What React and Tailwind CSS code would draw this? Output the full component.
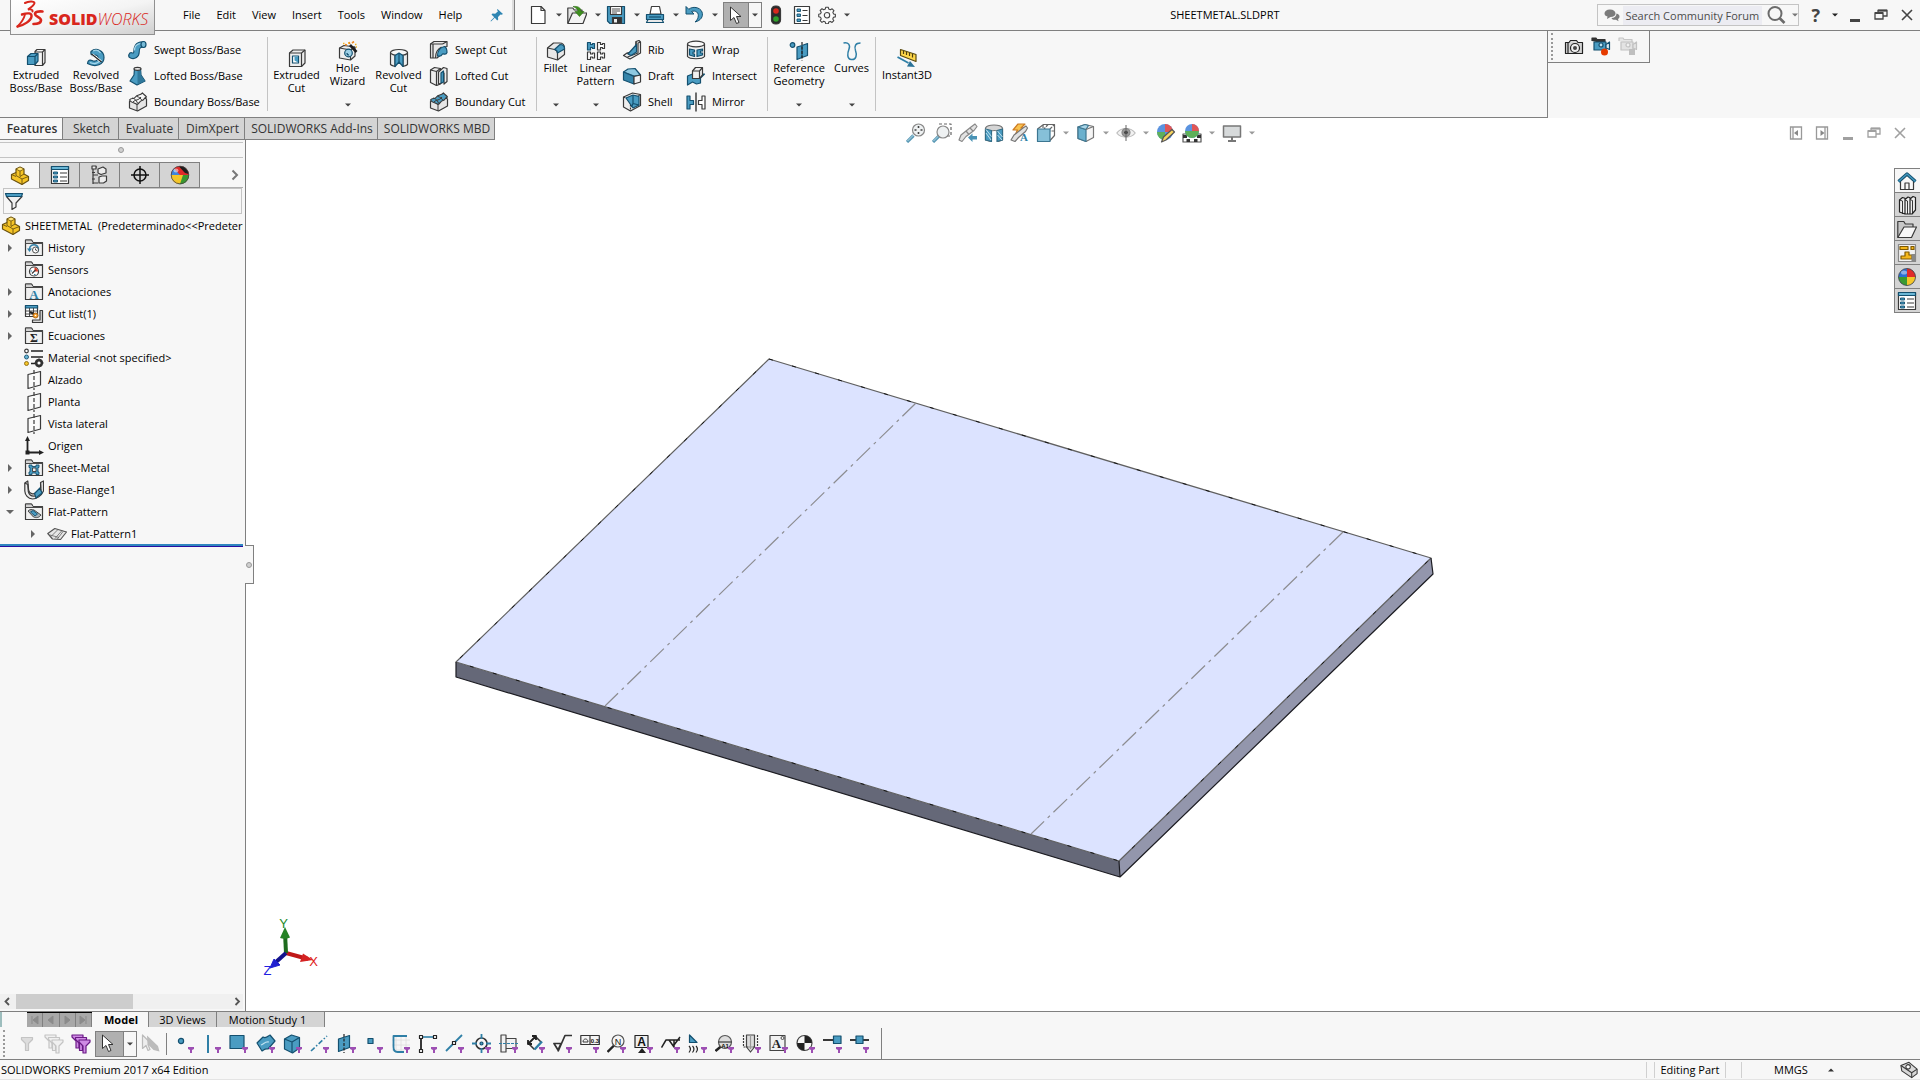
import React from "react";

const INK = "#3a3a3a";
const BLUE = "#4a9cc2";
const DEEP = "#14506f";

function Icon({ size = 20, children }) {
  return (
    <svg
      width={size}
      height={size}
      viewBox="0 0 20 20"
      fill="none"
      stroke={INK}
      strokeWidth="1.2"
      strokeLinejoin="round"
      className="shrink-0"
      aria-hidden="true"
    >
      {children}
    </svg>
  );
}

function Caret({ color = "#444", up = false }) {
  return (
    <svg width="6" height="4" viewBox="0 0 6 4" className="shrink-0" aria-hidden="true">
      <path d={up ? "M0 3.5h6L3 .5z" : "M0 .5h6L3 3.5z"} fill={color} />
    </svg>
  );
}

/* ---------- feature icons ---------- */
const ExtrudedBoss = () => (
  <Icon>
    <path d="M9 3.5l2-2h8v13l-2.5 3H9z" fill="#f4f4f4" />
    <path d="M16.5 4v13M9 4h7.5L19 1.5" />
    <path d="M1.500 8.500L5 5.500h7v7.500l-3 3.500H1.500z" fill={BLUE} stroke={DEEP} />
    <path d="M1.500 8.500H9v8M9 8.500l3-3" stroke={DEEP} />
  </Icon>
);
const RevolvedBoss = () => (
  <Icon>
    <path d="M5 3.500C10-1 18 2.500 18 9.500S10 20 1.500 15.500C2 12 4 11.500 6 12.500c3 1.500 6 0 6-3C12 7 9 6.500 7.500 8 5.500 8 4.500 6 5 3.500z" fill={BLUE} stroke={DEEP} />
    <path d="M7 3c3-1.500 6-.5 7.500 2M4 14.500c4 2 8 1 10-2" stroke="#a5d6ea" />
    <path d="M6 6.500l9 7" stroke="#fff" strokeWidth="2.6" />
    <path d="M5.500 6l10 8" stroke="#222" />
  </Icon>
);
const SweptBoss = () => (
  <Icon>
    <path d="M3.500 15.500C6 16.500 8.500 15 8.500 12c0-4 1-7.500 6-7.500" stroke={DEEP} strokeWidth="6.6" strokeLinecap="round" />
    <path d="M3.500 15.500C6 16.500 8.500 15 8.500 12c0-4 1-7.500 6-7.500" stroke={BLUE} strokeWidth="4.4" strokeLinecap="round" />
    <path d="M6.500 10.500c0-4 2-6.500 6-7" stroke="#a9d8ec" />
    <ellipse cx="15.5" cy="4.5" rx="2.5" ry="3" fill="#77bbd8" stroke={DEEP} />
  </Icon>
);
const LoftedBoss = () => (
  <Icon>
    <path d="M6.500 2.500L6 9l-4 6 7 4 8-4-4-6-.5-6.500z" fill={BLUE} stroke={DEEP} />
    <path d="M9.500 5v13.500L17 15l-4-6-.5-6z" fill="#2f789b" stroke="none" />
    <ellipse cx="9.5" cy="2.8" rx="3.5" ry="1.5" fill="#eee" />
  </Icon>
);
function Boundary({ top }) {
  return (
    <Icon>
      <path d="M1.500 9.500v6.500l8 3 9-5V7l-5-3z" fill="#e6e6e6" />
      <path d="M1.500 8c2-3 4 0 6-3s4-1 7-4c1 1.500 2.500 1.500 4 4-3 1-2 3-4.500 3.500S11 12 9 12.500c-2-2-5-1-7.500-4.500z" fill={top} />
      <path d="M5 10c3-3 5-1 8-5M9 12.500V19M4 6c3 .5 4 2 5.500 5M9 4.500c2 .5 4 2 5 4" strokeWidth="1" />
    </Icon>
  );
}
const ExtrudedCut = () => (
  <Icon>
    <path d="M2.500 5L6 2h12v13l-3.500 3.500h-12z" fill="#ededed" />
    <path d="M2.500 5h12v13.500M14.500 5L18 2" />
    <path d="M5.500 8h6v7h-6z" fill="#fff" stroke={DEEP} />
    <path d="M7.500 8.500h3.500v6l-3.500-2z" fill={BLUE} stroke="none" />
  </Icon>
);
const HoleWizard = () => (
  <Icon>
    <path d="M1.500 7L6 4.500l11 1.500v9l-4.500 4-11-2z" fill="#eee" />
    <path d="M1.500 7l11 2v10M12.500 9l4.500-3" />
    <circle cx="10.5" cy="12" r="3.8" fill="#9ed0e6" stroke={DEEP} />
    <path d="M9 12a2 2 0 002 2" stroke={DEEP} />
    <path d="M12 4l6.500 7" stroke="#1d1d1d" strokeWidth="2.6" />
    <path d="M11 1l.8 2M9 4l-2-.5M14 2l2-1.500" stroke="#f08a24" strokeWidth="1.6" />
    <path d="M10 2h1M17 3.500h1.500M5 2.500h1.500M18 6h1" stroke="#f4b21f" strokeWidth="1.6" />
  </Icon>
);
const RevolvedCut = () => (
  <Icon>
    <path d="M1.500 4.500v12c1 1 3 1.500 4.500 2V8l4 2 4-2v10.500c1.500-.5 3.500-1 4.500-2v-12z" fill="#ededed" />
    <ellipse cx="10" cy="4.5" rx="8.5" ry="3" fill="#f6f6f6" />
    <path d="M6 7.500L10 5l4 2.500v11L10 14l-4 4.500z" fill={BLUE} stroke={DEEP} />
    <path d="M10 5v9" stroke={DEEP} />
  </Icon>
);
const SweptCut = () => (
  <Icon>
    <path d="M1.500 4L5 1.500h13v5c-4 0-6 3-6 8l-4 3.500H1.500z" fill="#e9e9e9" />
    <path d="M1.500 4h12M13.500 4L18 1.500M4 4v14M6.500 18c0-6 2-9 6-11" />
    <path d="M8.500 16c0-5 2-8.500 7-9.500 2 1 2.500 3 2.500 6-1 3-3 1-4.500 1.500-1 2-3 2.500-5 2z" fill={BLUE} stroke={DEEP} />
  </Icon>
);
const LoftedCut = () => (
  <Icon>
    <path d="M1.500 4l4-2.500 6 1v15.500l-4 1.500-6-3z" fill="#ededed" />
    <path d="M1.500 4l6 1.500v14M7.500 5.500l4-3" />
    <path d="M9.500 6l5-4.500 3.500 1v13L15 18V7l-2 1v9l-3.500 1z" fill="#ededed" />
    <path d="M12 7l2.500-2v11L12 17z" fill={BLUE} stroke={DEEP} />
  </Icon>
);
const Fillet = () => (
  <Icon>
    <path d="M1.500 7l6-5h6c3 0 5 2 5 5v6.500l-7 5.500-10-3z" fill="#e8e8e8" />
    <path d="M1.500 7l7 1.500c2 .5 3 2 3 4v6.500" />
    <path d="M8.500 8.500l5.500-5c3 0 4.500 1.500 4.500 4.500l-7 4c0-2-1-3.200-3-3.500z" fill={BLUE} stroke={DEEP} />
  </Icon>
);
const PAT = "M0 0h3v2h2V1h2v5H5V5H3v2.5H0z";
const LinearPattern = () => (
  <Icon>
    <path d={PAT} transform="translate(1.5 1.5)" fill={BLUE} stroke={DEEP} />
    <path d={PAT} transform="translate(11.5 1.5)" fill="#fff" />
    <path d={PAT} transform="translate(1.5 11)" fill="#fff" />
    <path d={PAT} transform="translate(11.5 11)" fill="#fff" />
  </Icon>
);
const Rib = () => (
  <Icon>
    <path d="M14 1.500l3-1 1.500 1.500v11L8 19l-6.500-3.500L5 13l9-2z" fill="#eee" />
    <path d="M14 1.500V11L5 13.500M18.500 2l-2.500 1v10L5.500 17" />
    <path d="M6 14l8.500-9.500V12L9 15.500z" fill={BLUE} stroke={DEEP} />
  </Icon>
);
const Draft = () => (
  <Icon>
    <path d="M1.500 6L6 3l7-.5L18.500 9l-6.500 1z" fill="#8ec9e1" stroke={DEEP} />
    <path d="M1.500 6L12 10.500v7.500L1.500 14z" fill="#3585aa" stroke={DEEP} />
    <path d="M12 10.500l6.500-1.500v7l-6.500 2z" fill="#f4f4f4" />
  </Icon>
);
const Shell = () => (
  <Icon>
    <path d="M1.500 5l9-4 8 1.500v11L8.500 19l-7-4z" fill="#eee" />
    <path d="M1.500 5l7 3v11M8.500 8l10-5.500" strokeDasharray="2 1" />
    <path d="M4 6l7-3 6 1.500V13l-6 3z" fill={BLUE} stroke={DEEP} />
    <path d="M11 3v8.500l6 1.500M11 11.500L9.500 15" stroke={DEEP} />
  </Icon>
);
const Wrap = () => (
  <Icon>
    <path d="M1.500 4v12.500c2 3 15 3 17 0V4z" fill="#efefef" />
    <ellipse cx="10" cy="4" rx="8.5" ry="2.8" fill="#fafafa" />
    <path d="M3.500 9l5 1v2H7v2h1.500v2.500l-5-1.500zM16.500 9L11 10v6.500l5.500-1.500v-2h-2v-2h2z" fill={BLUE} stroke={DEEP} />
  </Icon>
);
const Intersect = () => (
  <Icon>
    <path d="M1.500 10l5-2h12l-4 4v5l-4 1-4-2-5 3z" fill={BLUE} stroke={DEEP} />
    <path d="M6.500 5l3-3.500h7V9l-3 3.500h-7z" fill="#f0f0f0" />
    <path d="M6.500 5h7v7.500M13.500 5l3-3.500" />
  </Icon>
);
const Mirror = () => (
  <Icon>
    <path d="M1 4h3v4.500h3.500v4H4V17H1z" fill={BLUE} stroke={DEEP} />
    <path d="M19 4h-3v4.500h-3.500v4H16V17h3z" fill="#fff" />
    <path d="M10 .5v19" stroke="#111" />
  </Icon>
);
const RefGeometry = () => (
  <Icon>
    <circle cx="3.5" cy="4" r="2.3" fill={BLUE} stroke={DEEP} />
    <path d="M8 6l5-1.500v12L8 18.500zM13 4.500l5.500-2v12l-5.500 2z" fill={BLUE} stroke={DEEP} />
    <path d="M13 1v18.500" stroke="#222" strokeDasharray="3 1.5" />
  </Icon>
);
const Curves = () => (
  <Icon>
    <path d="M1.500 2c5-1 7 2 5.500 6-1.500 4-2.500 10 2.500 10.500 5 .5 5.500-5 4-9C12 5 13.500 2 18.500 2" stroke="#2f7fa6" strokeWidth="1.5" />
  </Icon>
);
const Instant3D = () => (
  <Icon>
    <path d="M3.500 1.500l15.500 5v7l-15.500-6z" fill="#ffd84a" stroke="#5a4a10" />
    <path d="M6.500 3v3M9.500 4v3M12.500 5v3M15.500 6v3.500" stroke="#4d3f10" />
    <path d="M.5 9l11 6" stroke="#2f7fa6" strokeWidth="1.8" />
    <path d="M18 19l-8-.5 3-5.500z" fill="#2b7398" stroke="none" />
  </Icon>
);

/* ---------- title bar icons ---------- */
const NewDoc = () => (
  <Icon>
    <path d="M3.500 1.500h9.500l4 4v13h-13.500z" fill="#fff" />
    <path d="M13 1.500v4h4" />
  </Icon>
);
const OpenDoc = () => (
  <Icon>
    <path d="M.8 18V3h5l1.500 2H15v4" fill="#e4e4e4" />
    <path d="M.8 18.500L5.500 8H20l-4 10.500z" fill="#f3f3f3" />
    <path d="M6 1.500c5-.5 8 1 8 5h3L12.500 11.500 8 6.500h3C11 4 9 3 6 1.500z" fill="#3d8f1d" stroke="#2c6d12" strokeWidth=".6" />
  </Icon>
);
const SaveDoc = () => (
  <Icon>
    <path d="M1.500 1.500h17v17H4l-2.500-2.500z" fill={BLUE} stroke={DEEP} />
    <path d="M4.500 1.500h11v8h-11z" fill="#fff" />
    <path d="M6 4h8M6 6h8M6 8h5" strokeWidth=".9" />
    <path d="M6.500 12.500h9v6h-9z" fill="#333" />
    <path d="M8 14h3v3.500H8z" fill="#eee" stroke="none" />
  </Icon>
);
const PrintDoc = () => (
  <Icon>
    <path d="M5 9l1.500-7.500h8L16 9z" fill="#fff" />
    <path d="M1.500 9.500h17v5h-17z" fill={BLUE} stroke={DEEP} />
    <path d="M3 14.500h14l1.500 3h-17z" fill="#e9e9e9" stroke={DEEP} />
    <path d="M4 12h12" stroke={DEEP} />
  </Icon>
);
const Undo = () => (
  <Icon>
    <path d="M2 1.500v7.500h8L7.500 6.500c4-1.500 8 1 6.500 6-.5 2-1.500 3-3 4.500 6-1.500 8.500-5.500 7-10C16 2 8.500 1 4.800 4.300z" fill={BLUE} stroke={DEEP} strokeWidth="1" />
  </Icon>
);
const Pointer = () => (
  <svg width="14" height="19" viewBox="0 0 14 19" aria-hidden="true">
    <path d="M1.500 1v13.500l3.500-3 2.500 6 2.500-1-2.500-6H12z" fill="#fff" stroke="#333" />
  </svg>
);
const Traffic = () => (
  <Icon>
    <rect x="5.5" y="1" width="9" height="18" rx="4" fill="#2b2b2b" />
    <circle cx="10" cy="6" r="2.8" fill="#d8281c" stroke="none" />
    <circle cx="10" cy="14" r="2.8" fill="#2fa12b" stroke="none" />
  </Icon>
);
const ListIcon = () => (
  <Icon>
    <path d="M2.500 1.500h15v17h-15z" fill="#fff" />
    <path d="M5 4h3.500v2.500H5zM5 9h3.500v2.500H5zM5 14h3.500v2.500H5z" fill={BLUE} stroke={DEEP} strokeWidth=".9" />
    <path d="M10.500 5.500h5M10.500 10.500h5M10.500 15.500h5" />
  </Icon>
);
const Gear = () => (
  <svg width="18" height="18" viewBox="0 0 20 20" fill="none" stroke="#444" strokeWidth="1.200" strokeLinejoin="round" aria-hidden="true">
    <path d="M8.600 1.300h2.800l.5 2.100 1.900.8 1.900-1.100 2 2-1.200 1.900.8 1.800 2 .5v2.800l-2.100.5-.8 1.800 1.200 1.900-2 2-1.900-1.200-1.800.8-.5 2H8.600l-.5-2.100-1.800-.8-1.900 1.200-2-2 1.200-1.900-.8-1.800-2-.5V9.200l2-.5.8-1.800-1.200-1.900 2-2 1.900 1.200 1.800-.8z" fill="#fafafa" />
    <circle cx="10" cy="10.300" r="3" />
  </svg>
);
const Camera = () => (
  <Icon>
    <path d="M1.500 5.500H5l1.500-2h6L14 5.500h4.500v11h-17z" fill="#d5d5d5" stroke="#222" />
    <circle cx="11" cy="11" r="4.5" fill="#eee" stroke="#222" />
    <circle cx="11" cy="11" r="2" fill="#444" stroke="none" />
    <path d="M4 6v10" stroke="#222" />
  </Icon>
);
function Recorder({ off }) {
  const line = off ? "#c2c2c2" : DEEP;
  return (
    <Icon>
      <path d="M1 4V1h4l1 1.500h8V7" fill={off ? "#e6e6e6" : "#333"} stroke={off ? "#c6c6c6" : "#333"} />
      <path d="M3 5h12v8H3z" fill={off ? "#e3e3e3" : BLUE} stroke={line} />
      <path d="M15 7.500l3.500-2.500v7.500L15 11z" fill={off ? "#e3e3e3" : "#d8ecf4"} stroke={line} />
      <circle cx="10" cy="8" r="2" fill={off ? "#f1f1f1" : "#bfe2f0"} stroke={line} />
      {off ? <path d="M11 12h6v6h-6z" fill="#bfbfbf" stroke="none" /> : <circle cx="13.5" cy="15" r="3.5" fill="#e63b00" stroke="none" />}
    </Icon>
  );
}

/* ---------- feature tree icons ---------- */
const PartIcon = () => (
  <Icon>
    <path d="M1.500 8.500L6 6.500V3l4-2 4 2v5l4.500 2.500v4l-6.500 4-10.500-5.500z" fill="#f5c427" stroke="#6b5210" />
    <path d="M6 6.500v3L12 13v5.500M12 13l6.500-2.500M6 3l4 2v5.500L14 8M10 5l4-2M1.500 8.500L6 10.500" stroke="#6b5210" strokeWidth=".9" />
    <path d="M7 3l3-1.500L13 3l-3 1.500z" fill="#ffe680" stroke="none" />
  </Icon>
);
function FolderIcon({ children }) {
  return (
    <Icon>
      <path d="M1.500 17.500V2h6l1.500 2.500h9.500v13z" fill="#f0f0f0" />
      <path d="M1.500 5.500V2h6l1.500 2.500h9.500v1z" fill="#d2d2d2" strokeWidth=".9" />
      {children}
    </Icon>
  );
}
const HistoryIcon = () => (
  <FolderIcon>
    <path d="M5.500 11a4.500 4.500 0 118 3" stroke="#2f7fa6" strokeWidth="1.5" />
    <path d="M3 10.500h5l-2.500 3.500z" fill="#2f7fa6" stroke="none" />
    <circle cx="11.500" cy="12" r="3" fill="#fff" strokeWidth=".9" />
    <path d="M11.500 10.500V12l1.500.5" strokeWidth=".9" />
  </FolderIcon>
);
const SensorIcon = () => (
  <FolderIcon>
    <circle cx="10" cy="11.500" r="4.500" fill="#fff" />
    <path d="M10.500 7.500a4 4 0 013.500 4h-3.500z" fill="#e0402a" stroke="none" />
    <path d="M8 13.500l3.500-3.500" />
    <path d="M6.500 11h1.500M10 14.500h1.500" stroke="#2f7fa6" />
  </FolderIcon>
);
const AnnotIcon = () => (
  <FolderIcon>
    <text x="10" y="16.500" textAnchor="middle" fontSize="13" fontWeight="700" fontFamily="Liberation Serif, serif" fill="#2f7fa6" stroke="none">A</text>
  </FolderIcon>
);
const EquationIcon = () => (
  <FolderIcon>
    <text x="10" y="16" textAnchor="middle" fontSize="12" fontWeight="700" fontFamily="Liberation Serif, serif" fill="#222" stroke="none">Σ</text>
  </FolderIcon>
);
const CutListIcon = () => (
  <Icon>
    <path d="M1.500 1.500h12v11h-12z" fill="#fff" />
    <path d="M1.500 1.500h12V4h-12z" fill={BLUE} stroke={DEEP} />
    <path d="M1.500 7h12M1.500 10h12M5.500 4v8.500M9.500 4v8.500" strokeWidth=".9" />
    <path d="M18.500 6.500v12H8.500v-2.500H16V6.500z" fill="#d8d8d8" />
    <path d="M6 8l4 2" stroke="#222" strokeWidth="2" />
    <circle cx="11.500" cy="11.500" r="2.500" fill="#f6a12c" stroke="#a85d10" strokeWidth=".9" />
    <circle cx="11.500" cy="11.500" r=".8" fill="#fff" stroke="none" />
  </Icon>
);
const MaterialIcon = () => (
  <Icon>
    <circle cx="2.5" cy="3" r="1.8" fill="#fff" />
    <circle cx="2.5" cy="9" r="2" fill="#6bb7d6" stroke={DEEP} strokeWidth=".9" />
    <circle cx="2.5" cy="15.5" r="2" fill="#f5c427" stroke="#8a6a10" strokeWidth=".9" />
    <path d="M7 3h12M7 9h12M7 15.500h4" stroke="#222" strokeWidth="1.6" />
    <circle cx="15" cy="15" r="3" fill="#fff" stroke="#333" strokeWidth="2.4" />
    <path d="M15 10.500v9M10.500 15h9M12 12l6 6M18 12l-6 6" stroke="#333" strokeWidth="1.200" />
    <circle cx="15" cy="15" r="1.500" fill="#fff" stroke="none" />
  </Icon>
);
const PlaneIcon = () => (
  <Icon>
    <path d="M4 4.500l12.500-3v13.500l-12.500 3.500z" fill="#fafafa" />
    <path d="M10 0v20" strokeDasharray="4 2" />
  </Icon>
);
const OriginIcon = () => (
  <Icon>
    <path d="M3.500 3v13.500H17" stroke="#222" strokeWidth="1.8" />
    <path d="M1 5l2.500-5L6 5zM15 14l5 2.500-5 2.500zM1.500 14.500h4v4h-4z" fill="#222" stroke="none" />
  </Icon>
);
const SheetMetalIcon = () => (
  <FolderIcon>
    <path d="M5 7h3v1.500h4V7h3v2.500h-1V14h1v2.500h-3V15H8v1.500H5V14h1V9.500H5z" fill={BLUE} stroke={DEEP} strokeWidth=".9" />
    <rect x="8.5" y="10" width="3.5" height="3.5" fill="#eee" strokeWidth=".9" />
  </FolderIcon>
);
const BaseFlangeIcon = () => (
  <Icon>
    <path d="M.8 3l3-2 .8 9c.8 4 5 4.500 7 3l5-5V2.500L19.500 1v10c-2 5-7 8-11 8C4 18.500 1 15 .8 11z" fill="#eee" />
    <path d="M10.500 13.500L16 8l2 5-6 5z" fill={BLUE} stroke={DEEP} />
    <path d="M.8 3l3 1.500.5 7c1 4 4 5 7 4.500M16.500 2.500l.5 8" />
  </Icon>
);
const FlatFolderIcon = () => (
  <FolderIcon>
    <path d="M4 9c2-2 4-1.500 6-1l7 5c-2 3-5 3-7.500 2z" fill="#a9b3b8" strokeWidth=".9" />
    <path d="M6.500 10l2.500-1.500 4.500 3.500-2.500 2z" fill={BLUE} stroke={DEEP} strokeWidth=".9" />
  </FolderIcon>
);
const FlatPatternIcon = () => (
  <Icon>
    <path d="M.8 9.500l7-5L19.500 8l-6 7.500-8-.5z" fill="#e6e6e6" stroke="#555" />
    <path d="M4 12.500L11 5.500M8 14.500L15 6.500M3 11l9 2.500M10 15.500l6-8" strokeWidth=".8" stroke="#666" />
  </Icon>
);

const ConfigIcon = () => (
  <Icon>
    <path d="M3 1v18M3 2h4M3 10h5M3 18h5" />
    <path d="M2 1h4v3H2zM8 4l5-2 3 2v4l-5 1.500L8 8zM9 12l3-1h4.500v5l-3 2H9z" fill="#ececec" />
    <path d="M2 7.500h3M2 14h3" />
  </Icon>
);
const TargetIcon = () => (
  <Icon>
    <circle cx="10" cy="10" r="6" stroke="#111" strokeWidth="1.500" />
    <path d="M10 1v18M1 10h18" stroke="#111" strokeWidth="1.500" />
  </Icon>
);
const PropsIcon = () => (
  <Icon>
    <path d="M1.500 1.500h17v17h-17z" fill="#fff" />
    <path d="M1.500 1.500h17v3h-17z" fill="#6bb7d6" stroke={DEEP} />
    <path d="M3.500 7h4v2h-4zM3.500 11h4v2h-4zM3.500 15h4v2h-4z" fill={BLUE} stroke={DEEP} strokeWidth=".9" />
    <path d="M10 8h7M10 12h7M10 16h7" />
  </Icon>
);
const BallIcon = () => (
  <Icon>
    <circle cx="10" cy="10" r="8.5" fill="#2a6fd6" stroke="none" />
    <path d="M10 1.500a8.500 8.500 0 018.500 8.500H10z" fill="#e02a2a" stroke="none" />
    <path d="M18.500 10a8.500 8.500 0 01-8.500 8.500V10z" fill="#f4c62a" stroke="none" />
    <path d="M10 18.500A8.500 8.500 0 011.500 10H10z" fill="#3a9a32" stroke="none" />
    <circle cx="10" cy="10" r="8.5" stroke="#444" strokeWidth=".8" />
    <ellipse cx="7" cy="5.5" rx="3" ry="2" fill="#fff" opacity=".45" stroke="none" />
  </Icon>
);
const AppearanceTab = () => (
  <Icon>
    <circle cx="10" cy="10" r="9" fill="#e02a2a" stroke="none" />
    <path d="M1 10a9 9 0 013-6.500L10 10z" fill="#3f86df" stroke="none" />
    <path d="M1 10h9l-2 9a9 9 0 01-7-9z" fill="#f4c62a" stroke="none" />
    <path d="M10 10h9a9 9 0 01-11 9z" fill="#38982f" stroke="none" />
    <path d="M8 10h5l-3 9H8z" fill="#f4c62a" stroke="none" />
    <path d="M9 1.500C14 0 18 4 18.500 9L15 8z" fill="#1d1d1d" stroke="none" />
    <circle cx="10" cy="10" r="8.8" stroke="#444" strokeWidth=".8" />
    <ellipse cx="6" cy="5.5" rx="2.5" ry="2" fill="#fff" opacity=".5" stroke="none" />
  </Icon>
);

/* ---------- view toolbar icons ---------- */
function Lens({ children, x = 12.5, y = 7, r = 6 }) {
  return (
    <>
      <path d="M1 19l6.500-6.500" stroke="#5b9ab6" strokeWidth="3.2" />
      <path d="M1.500 18l6-6" stroke="#b5dae8" strokeWidth="1" />
      <circle cx={x} cy={y} r={r} fill="#eef1f2" stroke="#888" />
      {children}
    </>
  );
}
const ZoomFit = () => (
  <Icon>
    <Lens>
      <path d="M12.500 3v2M12.500 9v2M8.500 7h2M14.500 7h2" stroke="#444" strokeWidth="1.600" />
    </Lens>
  </Icon>
);
const ZoomArea = () => (
  <Icon>
    <path d="M7 1h12v12h-5" strokeDasharray="3 2" stroke="#666" />
    <Lens x={11} y={9} />
  </Icon>
);
const PrevView = () => (
  <Icon>
    <path d="M1 17l2-5 10-8 4-3 2 2.500-3 4-8 6-4 5z" fill="#e2e2e2" stroke="#888" />
    <path d="M12 5l3 3M8 8l3 3.500" stroke="#888" />
    <path d="M10 14.500l4.500-4v2.500H19v3.500h-4.500V19z" fill="#4a93b5" stroke="none" />
  </Icon>
);
const SectionView = () => (
  <Icon>
    <path d="M1.500 5c2-4 15-4 17 0v12l-4 1.500V9c-1-2-7-2-8 0v9.500l-5-1.500z" fill="#d5d5d5" stroke="#777" />
    <path d="M1.500 6l6 1.500V18.500l-6-1.500zM13 7.500l5.500-1.500v11l-5.500 1.500z" fill={BLUE} stroke="#336d87" />
    <path d="M2 10l5 7M2 6.500l5.500 7M13.500 12l4.500 5M13.500 8l5 6" stroke="#cfe8f2" strokeWidth=".9" />
  </Icon>
);
const AnnotView = () => (
  <Icon>
    <path d="M8 1h7l-4 4h3l-9 7 2.500-5H3z" fill="#f9c24e" stroke="#cc7a22" />
    <path d="M1 17l3-5 9-7 3-2 1.500 2-2 3.500-7 6-3.500 4z" fill="#e2e2e2" stroke="#777" />
    <text x="14" y="18" textAnchor="middle" fontSize="11" fontWeight="700" fontFamily="Liberation Serif, serif" fill="#2f7fa6" stroke="none">A</text>
  </Icon>
);
const Orientation = () => (
  <Icon>
    <path d="M1.500 6l6-4.500h11v11l-4.500 5" stroke="#666" />
    <path d="M14 6l4.500-4.500M7 2v4M12 1.500L8 6M18.500 8H14" stroke="#666" strokeDasharray="3 1" />
    <path d="M1.500 6H14v12.500H1.500z" fill="#86c0d8" stroke="#3c7691" />
  </Icon>
);
const DisplayStyle = () => (
  <Icon>
    <path d="M2 4l7-2.500 8.500 2v11l-7.500 4-8-3z" fill="#f5f5f5" stroke="#777" />
    <path d="M2 4l8 2.500v12l-8-3z" fill="#6ab0cd" stroke="#3c7691" />
    <path d="M2 4l7-2.500 3.500 1L10 6.500z" fill="#a9d5e7" stroke="#3c7691" />
    <path d="M10 6.500l7.500-3" stroke="#777" />
  </Icon>
);
const EyeIcon = () => (
  <Icon>
    <path d="M.8 10C5 4 15 4 19.200 10 15 15.500 5 15.500.8 10z" fill="#f2f2f2" stroke="#bbb" />
    <circle cx="10" cy="9.5" r="4" fill="#9a9a9a" stroke="#888" />
    <circle cx="10" cy="9.500" r="1.800" fill="#333" stroke="none" />
    <path d="M10 2v16" stroke="#666" strokeWidth="1" />
  </Icon>
);
const EditAppearance = () => (
  <Icon>
    <circle cx="9" cy="9" r="8" fill="#5a93e0" stroke="none" />
    <path d="M9 1a8 8 0 018 8H9z" fill="#e05656" stroke="none" />
    <path d="M1 9h8v8a8 8 0 01-8-8z" fill="#5fb05a" stroke="none" />
    <path d="M5.500 19l2-5L16 6.500 18.500 9l-8.500 8z" fill="#f6d45e" stroke="#555" />
  </Icon>
);
const SceneIcon = () => (
  <Icon>
    <path d="M1 11h18v8H1z" fill="#fff" stroke="#555" />
    <path d="M1 12h4v3H1zM15 12h4v3h-4zM4.500 16h3.500v3H4.500zM12 16h3.500v3H12z" fill="#333" stroke="none" />
    <circle cx="10" cy="8" r="7" fill="#5a93e0" stroke="none" />
    <path d="M10 1a7 7 0 017 7h-7z" fill="#e05656" stroke="none" />
    <path d="M3 8h7v7a7 7 0 01-7-7z" fill="#5fb05a" stroke="none" />
    <path d="M17 8h-7v7a7 7 0 007-7z" fill="#5fb05a" stroke="none" />
  </Icon>
);
const MonitorIcon = () => (
  <Icon>
    <path d="M1.500 3h17v11h-17z" fill="#d7dadb" stroke="#777" strokeWidth="1.500" />
    <path d="M10 14v3M6 18h8" stroke="#777" strokeWidth="2" />
  </Icon>
);

/* ---------- task pane icons ---------- */
const HomeIcon = () => (
  <Icon>
    <path d="M3.500 10v8.500h13V10L10 4z" fill="#f8f8f8" />
    <path d="M8 18.500v-6.500h4v6.500" />
    <path d="M1.500 10.500L10 3l8.500 7.500" stroke={DEEP} strokeWidth="3.2" />
    <path d="M1.500 10.500L10 3l8.500 7.500" stroke="#4096bd" strokeWidth="1.5" />
  </Icon>
);
const LibraryIcon = () => (
  <Icon>
    <path d="M2.500 5l3-2.500 2.500.8V19l-5.500-2zM8 4.500l3-2.500 2 .8V19H8zM13 4l3-2.500 2.500 1V15l-3.500 4h-2z" fill="#efefef" stroke="#222" />
    <path d="M2.500 5l3 1v13M8 5l2.500 1v13M13 4.500l2.500 1V19" stroke="#222" strokeWidth=".9" />
  </Icon>
);
const FileExplorer = () => (
  <Icon>
    <path d="M.8 18.500V2.500h6l1.500 2.500H16V8" fill="#c8c8c8" />
    <path d="M.8 18.500L7 8h12.500l-5 10.500z" fill="#f7f7f7" />
  </Icon>
);
const PaletteIcon = () => (
  <Icon>
    <path d="M1.500 1.500h17v17h-17z" fill="#f2f2f2" stroke="#888" />
    <path d="M3 3.500h8v3H3zM14 3.500h3v3h-3zM8 9h4v3h3v4H4v-3h4z" fill="#f5b81c" stroke="#805a00" />
    <path d="M14.500 11h4v7.500h-4z" fill="#888" stroke="none" />
  </Icon>
);

/* ---------- selection filter icons ---------- */
const F = ({ children }) => (
  <Icon>
    {children}
    <path d="M13 13h6v2l-2 1v3h-2v-3l-2-1z" fill="#9d4fb3" stroke="none" />
  </Icon>
);
const FUNNEL = "M0 0h11v2L7 6v7H4V6L0 2z";
const filterIcons = [
  ["Filter vertices", <F><circle cx="6" cy="7" r="2.600" fill={BLUE} stroke={DEEP} /></F>],
  ["Filter edges", <F><path d="M6 1v18" stroke="#2f7fa6" strokeWidth="2" /></F>],
  ["Filter faces", <F><path d="M1 1.500h14v13H1z" fill={BLUE} stroke={DEEP} /></F>],
  ["Filter surface bodies", <F><path d="M1 9l6-6c3 2 5-1 7-2l5 6-7 8c-3-1-4 1-6 2z" fill={BLUE} stroke={DEEP} /><path d="M5 11c3-1 4-4 8-3" stroke="#bfe2f0" /></F>],
  ["Filter solid bodies", <F><path d="M1.500 5l7-4 8 2.500V14l-7 5-8-4z" fill={BLUE} stroke={DEEP} /><path d="M1.500 5L9 8v10.500M9 8l7.500-4.500" stroke={DEEP} /></F>],
  ["Filter axes", <F><path d="M1 17L17 2" stroke="#2f7fa6" strokeWidth="1.600" strokeDasharray="5 2 1.5 2" /></F>],
  ["Filter planes", <F><path d="M1.500 5l11-3.500v12l-11 4z" fill={BLUE} stroke={DEEP} /><path d="M7 0v19" stroke="#222" strokeDasharray="3 1.5" /></F>],
  ["Filter sketch points", <F><path d="M4 4.500h5v5H4z" fill={BLUE} stroke={DEEP} /></F>],
  ["Filter sketches", <F><path d="M5 1v18M10 1v18M15 1v12M1 6h18M1 11h18M1 16h12" stroke="#ddd" strokeWidth=".8" /><path d="M16 2H2.500v11c0 3 1 5 4 5H13" stroke="#2f7fa6" strokeWidth="1.800" /></F>],
  ["Filter sketch segments", <F><path d="M3 3v14" stroke="#222" strokeWidth="1.800" /><path d="M3 3h14" stroke="#2f7fa6" strokeWidth="1.600" /><path d="M1.500 1.500h3V4.500h-3zM15.500 1.500h3V4.500h-3zM1.500 15.500h3v3h-3z" fill="#fff" stroke="#222" /></F>],
  ["Filter midpoints", <F><path d="M1 17L17 1" stroke="#2f7fa6" strokeWidth="1.800" /><path d="M7.500 7.500h3v3h-3z" fill="#fff" stroke="#222" /></F>],
  ["Filter center marks", <F><circle cx="9.500" cy="9.500" r="5.500" stroke="#333" strokeWidth="1.600" /><circle cx="9.500" cy="9.500" r="1.500" fill={BLUE} stroke={DEEP} /><path d="M9.500 0v5M9.500 14v5M0 9.500h5M14 9.500h5" stroke="#2f7fa6" strokeWidth="1.800" /></F>],
  ["Filter centerlines", <F><path d="M2 1h5v17H2zM7 4.500h10v10H7z" fill="#f1f1f1" stroke="#444" /><path d="M0 9.500h19" stroke="#2f7fa6" strokeDasharray="3 1" /></F>],
  ["Filter dimensions", <F><path d="M1.500 8.500l7 7M9 2l6 6" stroke="#333" strokeWidth="1.500" /><path d="M3 9l6-6M6 2h4v4M2 6v4h4" stroke="#222" strokeWidth="1.800" /><path d="M8.500 15.500L16 7.500" stroke="#2f7fa6" strokeWidth="2.400" /></F>],
  ["Filter surface finish symbols", <F><path d="M1 9.500h7L5 16zM5 17.500L12 1.500h7" stroke="#333" strokeWidth="1.700" /></F>],
  ["Filter geometric tolerances", <F><path d="M.8 1.500h18.500v9H.8zM10 1.500v9" stroke="#333" fill="#f4f4f4" /><path d="M3 8c0-4 5-4 5 0z" strokeWidth="1" /><text x="15" y="9" textAnchor="middle" fontSize="6" fontWeight="700" fontFamily="Liberation Sans, sans-serif" fill="#111" stroke="none">0.3</text></F>],
  ["Filter notes", <F><path d="M.5 18l7-7" stroke="#222" strokeWidth="2.400" /><circle cx="11" cy="7" r="6" fill="#f5f5f5" stroke="#555" /><text x="11" y="10.500" textAnchor="middle" fontSize="9" fontFamily="Liberation Sans, sans-serif" fill="#111" stroke="none">N</text></F>],
  ["Filter datum features", <F><path d="M1 1.500h13v12H1z" fill="#eee" stroke="#222" /><path d="M4 19h8l-4-5z" fill="#222" stroke="none" /><text x="7.500" y="11.500" textAnchor="middle" fontSize="12" fontWeight="700" fontFamily="Liberation Sans, sans-serif" fill="#111" stroke="none">A</text></F>],
  ["Filter weld symbols", <F><path d="M.5 13.500L5 6h14M8 6l5 7V6M13 11l6-8" stroke="#222" strokeWidth="1.500" /></F>],
  ["Filter weld beads", <F><path d="M1.500 1v7.500H9z" fill={BLUE} stroke={DEEP} /><path d="M1 12c2 2 2 4 0 6.500M4.500 12c2 2 2 4 0 6.500M8 12c2 2 2 4 0 6.500" stroke="#222" /></F>],
  ["Filter datum targets", <F><path d="M.5 17l6-5" stroke="#222" strokeWidth="2.400" /><circle cx="10" cy="8" r="6.500" fill="#ddd" stroke="#555" /><path d="M3.500 8h13" /><text x="10" y="14" textAnchor="middle" fontSize="6" fontWeight="700" fontFamily="Liberation Sans, sans-serif" fill="#111" stroke="none">A1</text></F>],
  ["Filter cosmetic threads", <F><path d="M4.500 1h8v12l-4 5-4-5z" fill="#ddd" stroke="#444" /><path d="M1.500 1v12M15.500 1v11M1.500 13h12" strokeDasharray="2 1" /><path d="M8.500 1v14" stroke="#999" /></F>],
  ["Filter blocks", <F><path d="M1 1.500h15v15H1z" fill="#f1f1f1" stroke="#444" /><text x="7.500" y="14" textAnchor="middle" fontSize="13" fontWeight="700" fontFamily="Liberation Serif, serif" fill="#222" stroke="none">A</text><circle cx="13.500" cy="4" r="1.500" strokeWidth=".9" /></F>],
  ["Filter dowel symbols", <F><circle cx="8.500" cy="9" r="7.500" fill="#f7f7f7" stroke="#444" /><path d="M8.500 1.500A7.500 7.500 0 0116 9H8.500zM8.500 16.500A7.500 7.500 0 011 9h7.500z" fill="#222" stroke="none" /></F>],
  ["Filter connection points", <F><path d="M0 6h11" stroke="#222" strokeWidth="1.800" /><path d="M10.500 2h7.500v7.500h-7.500z" fill={BLUE} stroke={DEEP} /></F>],
  ["Filter routing points", <F><path d="M0 6h19" stroke="#222" strokeWidth="1.800" /><path d="M6 2h7v7.500H6z" fill={BLUE} stroke={DEEP} /></F>],
];

/* ---------- layout pieces ---------- */
function BigButton({ icon, lines, width, menu }) {
  return (
    <button
      type="button"
      className={`${width} flex shrink-0 flex-col items-center text-center text-[11px] leading-[13px] whitespace-nowrap ${menu ? "pt-[10px]" : "pt-[17px]"}`}
    >
      {icon}
      <span className={menu ? "h-[26px]" : ""}>
        {lines.map((l) => (
          <span key={l} className="block">{l}</span>
        ))}
      </span>
      {menu && <span className="mt-[10px] flex h-4 items-center"><Caret /></span>}
    </button>
  );
}

function StackedList({ items, className }) {
  return (
    <div className={`flex shrink-0 flex-col pt-[6px] ${className}`}>
      {items.map(([name, icon]) => (
        <button key={name} type="button" className="flex h-[26px] items-center gap-[6px] text-[11px] whitespace-nowrap">
          {icon}
          {name}
        </button>
      ))}
    </div>
  );
}

const Divider = () => <div className="my-[6px] w-px shrink-0 bg-[#c4c4c4]" />;

function Logo() {
  return (
    <div className="z-10 ml-[10px] flex h-[35px] w-[145px] shrink-0 items-start gap-[5px] self-start border border-t-0 border-[#909090] bg-linear-to-br from-white via-[#f4f4f4] to-[#cfcfcf] pl-[5px] text-[#d9261c]">
      <svg width="28" height="28" viewBox="0 0 28 28" fill="none" stroke="#d9261c" strokeLinecap="round" aria-hidden="true">
        <path d="M9 3C12 1.500 18.500.800 18.500 3c0 2-3 4-6.500 6.500 3-.5 5 .2 4.500 2" strokeWidth="2" />
        <path d="M6 14.500c6-2 10-1.500 9.500 2C15 20.500 8 25.500 1.500 26.500" strokeWidth="2.400" />
        <path d="M9 14.500C8 18.500 5 23 1.500 26.500" strokeWidth="1.800" />
        <path d="M26.500 11.500c-4-.5-7.500.3-7.500 2.500 0 2.500 6.500 3.500 6 6.500-.3 2.500-3.500 3.500-7.500 3.500" strokeWidth="2.600" />
      </svg>
      <span className="pt-[7px] text-[16px] leading-[24px] whitespace-nowrap">
        <b className="font-extrabold">SOLID</b>
        <i className="font-light">WORKS</i>
      </span>
    </div>
  );
}

function WindowButtons({ color }) {
  return (
    <div className="flex items-center gap-3">
      <button type="button" aria-label="Minimize">
        <svg width="14" height="14" viewBox="0 0 14 14"><path d="M2 11h10v3H2z" fill={color} /></svg>
      </button>
      <button type="button" aria-label="Restore">
        <svg width="14" height="14" viewBox="0 0 14 14" fill="none" stroke={color} strokeWidth="1.300"><path d="M1 5h8v6H1zM4 5V2.500h9V8H9" /><path d="M4 2.500h9M1 5h8" strokeWidth="2" /></svg>
      </button>
      <button type="button" aria-label="Close">
        <svg width="14" height="14" viewBox="0 0 14 14" stroke={color} strokeWidth="1.600"><path d="M2 2l10 10M12 2L2 12" /></svg>
      </button>
    </div>
  );
}

function TitleBar() {
  const quick = [
    ["New", <NewDoc />],
    ["Open", <OpenDoc />],
    ["Save", <SaveDoc />],
    ["Print", <PrintDoc />],
    ["Undo", <Undo />],
  ];
  return (
    <header className="flex h-[31px] shrink-0 items-center border-b border-[#808080]">
      <Logo />
      <nav className="flex items-center gap-4 pl-7 text-[11px] whitespace-nowrap">
        {["File", "Edit", "View", "Insert", "Tools", "Window", "Help"].map((m) => (
          <button key={m} type="button">{m}</button>
        ))}
      </nav>
      <button type="button" aria-label="Pin menu" className="ml-7">
        <svg width="14" height="14" viewBox="0 0 14 14" aria-hidden="true">
          <path d="M7.500 1l5.500 5-1.500.8-1-.3-2.500 2.500.2 2.500-1 1L4.800 9.800 1 13.500l-.5-.5 3.700-3.800L1.500 6.500l1-1 2.700.2L8 3.300 7 2z" fill="#2f86b3" />
        </svg>
      </button>
      <div className="mr-[13px] ml-2 h-[30px] w-[3px] border-r border-[#808080] bg-[#dcdcdc]" />
      {quick.map(([name, icon]) => (
        <div key={name} className="flex w-[39px] shrink-0 items-center gap-[5px]">
          <button type="button" aria-label={name}>{icon}</button>
          <button type="button" aria-label={`${name} options`} className="p-[3px]"><Caret /></button>
        </div>
      ))}
      <div className="flex h-[26px] shrink-0 border border-[#808080]">
        <button type="button" aria-label="Select" className="flex w-[25px] items-center justify-center border-r border-[#808080] bg-[#b0b0b0]"><Pointer /></button>
        <button type="button" aria-label="Select options" className="flex w-[12px] items-center justify-center bg-[#f7f7f7]"><Caret /></button>
      </div>
      <div className="flex shrink-0 items-center gap-[6px] pl-1">
        <button type="button" aria-label="Rebuild"><Traffic /></button>
        <button type="button" aria-label="File properties"><ListIcon /></button>
        <button type="button" aria-label="Options"><Gear /></button>
        <button type="button" aria-label="Options menu" className="px-[2px]"><Caret /></button>
      </div>
      <div className="flex-1 text-center text-[11px]">SHEETMETAL.SLDPRT</div>
      <label className="flex h-[22px] w-[202px] shrink-0 items-center border border-[#c4c4c4]">
        <svg width="16" height="13" viewBox="0 0 16 13" className="ml-[6px]" aria-hidden="true">
          <path d="M6 .5c3.500 0 5.500 1.800 5.500 4S9.500 8 6.500 8L3 10l.5-2.500C1.500 7 .5 6 .5 4.500c0-2.200 2-4 5.500-4z" fill="#7b7b7b" />
          <path d="M12.500 4.500c2 .5 3 1.800 3 3 0 1-.5 2-1.500 2.500l.5 2.300-2.500-1.500C9.500 11 8 10.500 7.500 9c3 0 5-1.800 5-4.500z" fill="#7b7b7b" />
        </svg>
        <input type="text" aria-label="Search Community Forum" placeholder="Search Community Forum" className="ml-[3px] h-[19px] w-[139px] bg-[#ececf2] pl-[2px] text-[11px] outline-none placeholder:text-[#4c4c4c]" />
        <svg width="20" height="20" viewBox="0 0 20 20" fill="none" className="ml-1" aria-hidden="true">
          <circle cx="9" cy="8.500" r="6.500" stroke="#6b6b6b" strokeWidth="2" />
          <path d="M13.500 13l5 5" stroke="#6b6b6b" strokeWidth="2.600" />
        </svg>
        <span className="ml-[6px]"><Caret color="#777" /></span>
      </label>
      <button type="button" aria-label="Help" className="ml-[12px] text-[18px] leading-[20px] font-bold text-[#444]">?</button>
      <button type="button" aria-label="Help menu" className="mr-[7px] ml-[9px] p-[3px]"><Caret color="#222" /></button>
      <div className="pr-[6px]"><WindowButtons color="#444" /></div>
    </header>
  );
}

function Ribbon() {
  return (
    <div className="flex h-[87px] shrink-0">
      <div className="flex min-w-0 flex-1 overflow-hidden border-r border-b border-[#808080]">
        <div className="flex w-[267px] shrink-0 pl-[6px]">
          <BigButton width="w-[60px]" icon={<ExtrudedBoss />} lines={["Extruded", "Boss/Base"]} />
          <BigButton width="w-[60px]" icon={<RevolvedBoss />} lines={["Revolved", "Boss/Base"]} />
          <StackedList className="pl-[2px]" items={[["Swept Boss/Base", <SweptBoss />], ["Lofted Boss/Base", <LoftedBoss />], ["Boundary Boss/Base", <Boundary top="#f6f6f6" />]]} />
        </div>
        <Divider />
        <div className="flex w-[268px] shrink-0 pl-[3px]">
          <BigButton width="w-[51px]" icon={<ExtrudedCut />} lines={["Extruded", "Cut"]} />
          <BigButton width="w-[51px]" menu icon={<HoleWizard />} lines={["Hole", "Wizard"]} />
          <BigButton width="w-[51px]" icon={<RevolvedCut />} lines={["Revolved", "Cut"]} />
          <StackedList className="pl-[5px]" items={[["Swept Cut", <SweptCut />], ["Lofted Cut", <LoftedCut />], ["Boundary Cut", <Boundary top={BLUE} />]]} />
        </div>
        <Divider />
        <div className="flex w-[230px] shrink-0">
          <BigButton width="w-[37px]" menu icon={<Fillet />} lines={["Fillet"]} />
          <BigButton width="w-[43px]" menu icon={<LinearPattern />} lines={["Linear", "Pattern"]} />
          <StackedList className="w-[69px] pl-[5px]" items={[["Rib", <Rib />], ["Draft", <Draft />], ["Shell", <Shell />]]} />
          <StackedList className="" items={[["Wrap", <Wrap />], ["Intersect", <Intersect />], ["Mirror", <Mirror />]]} />
        </div>
        <Divider />
        <div className="flex w-[107px] shrink-0">
          <BigButton width="w-[62px]" menu icon={<RefGeometry />} lines={["Reference", "Geometry"]} />
          <BigButton width="w-[43px]" menu icon={<Curves />} lines={["Curves"]} />
        </div>
        <Divider />
        <BigButton width="w-[62px]" icon={<Instant3D />} lines={["Instant3D"]} />
      </div>
      <div className="w-[372px] shrink-0">
        <div className="flex h-8 w-[102px] items-center gap-[7px] border-r border-b border-[#808080] pl-[3px]">
          <div className="mr-1 h-[27px] border-l-2 border-dotted border-[#999]" />
          <button type="button" aria-label="Capture image"><Camera /></button>
          <button type="button" aria-label="Record video"><Recorder /></button>
          <button type="button" aria-label="Stop recording" disabled><Recorder off /></button>
        </div>
      </div>
    </div>
  );
}

const ribbonTabs = [
  ["Features", "w-[63px]"],
  ["Sketch", "w-[56px]"],
  ["Evaluate", "w-[60px]"],
  ["DimXpert", "w-[66px]"],
  ["SOLIDWORKS Add-Ins", "w-[133px]"],
  ["SOLIDWORKS MBD", "w-[117px]"],
];

const treeRows = [
  ["History", <HistoryIcon />, "closed"],
  ["Sensors", <SensorIcon />, ""],
  ["Anotaciones", <AnnotIcon />, "closed"],
  ["Cut list(1)", <CutListIcon />, "closed"],
  ["Ecuaciones", <EquationIcon />, "closed"],
  ["Material <not specified>", <MaterialIcon />, ""],
  ["Alzado", <PlaneIcon />, ""],
  ["Planta", <PlaneIcon />, ""],
  ["Vista lateral", <PlaneIcon />, ""],
  ["Origen", <OriginIcon />, ""],
  ["Sheet-Metal", <SheetMetalIcon />, "closed"],
  ["Base-Flange1", <BaseFlangeIcon />, "closed"],
  ["Flat-Pattern", <FlatFolderIcon />, "open"],
];

function Expander({ state }) {
  return (
    <span className="flex w-3 shrink-0 justify-center">
      {state && (
        <svg width="8" height="8" viewBox="0 0 8 8" aria-hidden="true">
          <path d={state === "open" ? "M0 2h8L4 6z" : "M2 0v8l4-4z"} fill="#666" />
        </svg>
      )}
    </span>
  );
}

function SidePanel() {
  const tabs = [
    ["FeatureManager", <PartIcon />],
    ["PropertyManager", <PropsIcon />],
    ["ConfigurationManager", <ConfigIcon />],
    ["DimXpertManager", <TargetIcon />],
    ["DisplayManager", <AppearanceTab />],
  ];
  return (
    <aside className="relative z-10 flex w-[246px] shrink-0 flex-col">
      <div role="tablist" className="flex h-[22px] shrink-0 text-[12px] whitespace-nowrap text-[#333]">
        {ribbonTabs.map(([name, w], i) => (
          <button
            key={name}
            type="button"
            role="tab"
            aria-selected={i === 0}
            className={`${w} shrink-0 border-r border-b border-[#808080] pl-[2px] text-center leading-[20px] ${i === 0 ? "bg-[#f7f7f7] font-semibold" : "bg-[#d4d4d4]"}`}
          >
            {name}
          </button>
        ))}
      </div>
      <div className="flex min-h-0 flex-1 flex-col border-r border-[#808080] bg-[#f7f7f7] pr-[2px]">
        <div className="mt-[2px] flex h-4 shrink-0 items-center justify-center border-y border-[#c4c4c4] pr-[2px]">
          <span className="size-[6px] rounded-full border border-[#999] bg-[#d0d0d0]" />
        </div>
        <div className="mt-1 flex h-[26px] shrink-0 border-b border-[#b0b0b0]">
          {tabs.map(([name, icon], i) => (
            <button
              key={name}
              type="button"
              aria-label={name}
              className={`flex h-[26px] w-10 items-center justify-center border-t border-r border-[#808080] ${i === 0 ? "bg-[#f7f7f7]" : "border-b bg-[#d4d4d4]"}`}
            >
              {icon}
            </button>
          ))}
          <button type="button" aria-label="More tabs" className="ml-auto pr-1">
            <svg width="8" height="12" viewBox="0 0 8 12" fill="none" stroke="#777" strokeWidth="2" aria-hidden="true"><path d="M1.500 1.500L6 6l-4.500 4.500" /></svg>
          </button>
        </div>
        <div className="mr-[1px] ml-[3px] flex h-[26px] shrink-0 items-center border border-[#c4c4c4]">
          <Icon>
            <path d="M2.500 5.500L8 12v6.500l4-2.500v-4l6-6.500z" fill="#f0f0f0" />
            <path d="M1.500 2.500h17l-1 3h-15z" fill={BLUE} stroke={DEEP} />
          </Icon>
        </div>
        <div className="min-h-0 flex-1 text-[11px] whitespace-nowrap">
          <div className="flex h-[22px] items-center gap-1 overflow-hidden pt-[2px] pl-px">
            <PartIcon />
            <span className="whitespace-pre">{"SHEETMETAL  (Predeterminado<<Predeterminado>>)"}</span>
          </div>
          <ul>
            {treeRows.map(([name, icon, state]) => (
              <li key={name} className="flex h-[22px] items-center pt-[2px] pl-1">
                <Expander state={state} />
                <span className="mr-1 ml-[8px] flex">{icon}</span>
                {name}
              </li>
            ))}
            <li className="flex h-[22px] items-center pt-[2px] pl-[27px]">
              <Expander state="closed" />
              <span className="mr-1 ml-[8px] flex"><FlatPatternIcon /></span>
              Flat-Pattern1
            </li>
          </ul>
          <div className="h-[3px] border-b border-[#2a0fa0] bg-[#2f86c0]" />
        </div>
        <div className="mb-[2px] flex h-[15px] shrink-0 items-center justify-between bg-[#f0f0f0] pr-[2px] pl-1">
          <svg width="7" height="9" viewBox="0 0 7 9" fill="none" stroke="#555" strokeWidth="1.800" aria-hidden="true"><path d="M5 1L1.500 4.500 5 8" /></svg>
          <div className="mr-auto ml-[5px] h-[15px] w-[117px] bg-[#cdcdcd]" />
          <svg width="7" height="9" viewBox="0 0 7 9" fill="none" stroke="#555" strokeWidth="1.800" aria-hidden="true"><path d="M1.500 1L5 4.500 1.500 8" /></svg>
        </div>
      </div>
      <button type="button" aria-label="Collapse panel" className="absolute top-[427px] left-[245px] flex h-[39px] w-[9px] items-center justify-center border border-l-0 border-[#808080] bg-[#f7f7f7]">
        <span className="size-[6px] rounded-full border border-[#999] bg-[#d0d0d0]" />
      </button>
    </aside>
  );
}

function ViewToolbar() {
  const items = [
    ["Zoom to fit", <ZoomFit />],
    ["Zoom to area", <ZoomArea />],
    ["Previous view", <PrevView />],
    ["Section view", <SectionView />],
    ["Dynamic annotation views", <AnnotView />],
    ["View orientation", <Orientation />, true],
    ["Display style", <DisplayStyle />, true],
    ["Hide/show items", <EyeIcon />, true],
    ["Edit appearance", <EditAppearance />],
    ["Apply scene", <SceneIcon />, true],
    ["View settings", <MonitorIcon />, true],
  ];
  return (
    <div className="flex items-center gap-[6px] pr-[5px]">
      {items.map(([name, icon, menu]) => (
        <React.Fragment key={name}>
          <button type="button" aria-label={name}>{icon}</button>
          {menu && <span className="flex w-2 justify-center"><Caret color="#999" /></span>}
        </React.Fragment>
      ))}
    </div>
  );
}

function Viewport() {
  const pane = [
    ["Resources", <HomeIcon />],
    ["Design library", <LibraryIcon />],
    ["File explorer", <FileExplorer />],
    ["View palette", <PaletteIcon />],
    ["Appearances", <BallIcon />],
    ["Custom properties", <PropsIcon />],
  ];
  return (
    <main className="relative min-w-0 flex-1 bg-white">
      <svg viewBox="246 118 1674 893" className="absolute inset-0 h-full w-full" role="img" aria-label="Sheet metal flat pattern">
        <path d="M456 662L1119 861 1120 877 456 677z" fill="#656878" />
        <path d="M1119 861L1431 558 1433 574 1120 877z" fill="#9396ac" />
        <path d="M769 359L1431 558 1119 861 456 662z" fill="#dce3ff" />
        <g fill="none" strokeLinejoin="round">
          <path d="M769 359L1431 558 1119 861 456 662z" stroke="#606060" strokeWidth="1.200" />
          <path d="M769 359L1431 558 1119 861 456 662z" stroke="#111" strokeWidth="1" strokeDasharray="4 20" />
          <path d="M456 662v15l664 200 313-303-2-16M1119 861l1 16" stroke="#1c1c22" strokeWidth="1.200" />
          <path d="M916 403L605 706M1343 532L1031 834" stroke="#8c8c90" strokeWidth="1.200" strokeDasharray="19 5 3 5" />
        </g>
        <path d="M286 953l22 6" stroke="#c01818" strokeWidth="4" />
        <path d="M303 953.500l10 6.500-13 2z" fill="#d42222" />
        <path d="M286 953l-1-20" stroke="#1e6b1e" strokeWidth="4" />
        <path d="M280 938l5-11 5 10.500c-3 1.500-7 1.500-10 .5z" fill="#258225" />
        <path d="M286 953l-10 9" stroke="#14148c" strokeWidth="4" />
        <path d="M270 968l4-9 6 6z" fill="#2020d0" stroke="#2020d0" />
        <g fontFamily="Liberation Sans, sans-serif" fontSize="13" textAnchor="middle">
          <text x="283.500" y="928" fill="#1e8a2a">Y</text>
          <text x="313.500" y="966" fill="#e02020">X</text>
          <text x="267.500" y="975" fill="#2020e0">Z</text>
        </g>
      </svg>
      <div className="relative flex h-[30px] items-center justify-center">
        <ViewToolbar />
        <div className="absolute right-[13px] flex items-center gap-3">
          <button type="button" aria-label="Dock left">
            <svg width="14" height="14" viewBox="0 0 14 14" fill="none" stroke="#999" strokeWidth="1.300"><path d="M1.500 1h11v12h-11zM4 1v12" /><path d="M9 4v6L5 7z" fill="#888" stroke="none" /></svg>
          </button>
          <button type="button" aria-label="Dock right">
            <svg width="14" height="14" viewBox="0 0 14 14" fill="none" stroke="#999" strokeWidth="1.300"><path d="M1.500 1h11v12h-11zM10 1v12" /><path d="M5.500 4v6l4-3z" fill="#888" stroke="none" /></svg>
          </button>
          <WindowButtons color="#a0a0a0" />
        </div>
      </div>
      <div className="absolute top-[50px] right-0 flex w-[26px] flex-col border-t border-l border-[#808080]">
        {pane.map(([name, icon], i) => (
          <button key={name} type="button" aria-label={name} className={`flex h-6 items-center justify-center border-b border-[#808080] pr-[2px] ${i === 0 ? "bg-[#f7f7f7]" : "bg-[#d4d4d4]"}`}>
            {icon}
          </button>
        ))}
      </div>
    </main>
  );
}

function ModelTabs() {
  const nav = [
    ["First", "M5 3v8M11 3v8L6 7z"],
    ["Previous", "M10 3v8L5 7z"],
    ["Next", "M5 3v8l5-4z"],
    ["Last", "M10 3v8M4 3v8l5-4z"],
  ];
  const tab = "border-r border-[#808080] bg-[#d4d4d4]";
  return (
    <div className="flex h-4 shrink-0 border-t border-[#808080] text-[11px] leading-[13px] whitespace-nowrap">
      <div className="mr-[25px] w-[2px] bg-[#9dbdbd]" />
      <div className="flex w-[65px] border-t border-black bg-[#a8a8a8]">
        {nav.map(([name, d]) => (
          <button key={name} type="button" aria-label={name} className="flex-1 border-r border-[#808080]">
            <svg width="15" height="14" viewBox="0 0 15 14" fill="#8b8b8b" stroke="#8b8b8b" aria-hidden="true"><path d={d} /></svg>
          </button>
        ))}
      </div>
      <button type="button" className="w-[57px] border-r border-[#808080] pl-[2px] font-bold text-black">Model</button>
      <button type="button" className={`w-[68px] ${tab}`}>3D Views</button>
      <button type="button" className={`w-[108px] pr-[6px] ${tab}`}>Motion Study 1</button>
    </div>
  );
}

function FilterBar() {
  return (
    <div className="flex h-[33px] shrink-0 items-center border-b border-[#808080] pt-px">
      <div className="ml-[3px] h-[27px] border-l-2 border-dotted border-[#999]" />
      <button type="button" aria-label="Toggle selection filter" className="ml-3">
        <Icon><path d={FUNNEL} transform="translate(4.5 3.5)" fill="#ddd" stroke="#c4c4c4" /></Icon>
      </button>
      <button type="button" aria-label="Clear all filters" className="ml-[7px]">
        <Icon>
          {[0, 1, 2].map((n) => (
            <path key={n} d={FUNNEL} transform={`translate(${1 + n * 3.5} ${1 + n * 2.5})`} fill="#f0f0f0" stroke="#c4c4c4" />
          ))}
        </Icon>
      </button>
      <button type="button" aria-label="Select all filters" className="ml-[7px]">
        <Icon>
          {[0, 1, 2].map((n) => (
            <path key={n} d={FUNNEL} transform={`translate(${1 + n * 3.5} ${1 + n * 2.5})`} fill="#cf8be4" stroke="#6b1b86" />
          ))}
        </Icon>
      </button>
      <div className="ml-1 flex h-[26px] border border-[#808080]">
        <button type="button" aria-label="Select" className="flex w-[28px] items-center justify-center border-r border-[#808080] bg-[#b0b0b0] pr-1"><Pointer /></button>
        <button type="button" aria-label="Select options" className="flex w-[12px] items-center justify-center"><Caret /></button>
      </div>
      <button type="button" aria-label="Magnified selection" className="ml-1">
        <Icon>
          <path d="M1.500 1v13.500l3.500-3 2 5 2-1-2-5h4z" fill="#eee" stroke="#bbb" />
          <path d="M6 1.500L17 12l1.500 5.500-6-1.500-6-6z" fill="#bbb" stroke="none" />
        </Icon>
      </button>
      <div className="mr-1 ml-[5px] h-[22px] w-px bg-[#808080]" />
      {filterIcons.map(([name, icon]) => (
        <button key={name} type="button" aria-label={name} className="flex w-[27px] shrink-0 justify-center">{icon}</button>
      ))}
      <div className="ml-2 h-[32px] w-px bg-[#808080]" />
    </div>
  );
}

function StatusBar() {
  return (
    <footer className="flex h-5 shrink-0 items-center border-b border-[#e4e4e4] text-[11px] leading-[18px] whitespace-nowrap">
      <span className="mr-auto pl-px">SOLIDWORKS Premium 2017 x64 Edition</span>
      <span className="h-4 w-[8px] border-l border-[#d0d0d0]" />
      <span className="h-4 w-[72px] border-x border-[#d0d0d0] text-center leading-4">Editing Part</span>
      <span className="h-4 w-[16px] border-r border-[#d0d0d0]" />
      <button type="button" className="ml-8 flex w-[60px] items-center justify-between">
        MMGS
        <Caret up color="#333" />
      </button>
      <span className="mr-[2px] ml-[66px]">
        <Icon size={18}>
          <path d="M1 5l9-3.500L19 9v5l-6 4.500L2 11z" fill="#d8d8d8" />
          <path d="M1 5l12 8v5.500M13 13l6-4" />
          <circle cx="9" cy="6.5" r="2.5" fill="#fff" />
        </Icon>
      </span>
    </footer>
  );
}

export default function App() {
  return (
    <div className="flex h-screen flex-col overflow-hidden bg-[#f7f7f7] font-['Open_Sans','Noto_Sans',sans-serif] text-black">
      <TitleBar />
      <Ribbon />
      <div className="flex min-h-0 flex-1">
        <SidePanel />
        <Viewport />
      </div>
      <ModelTabs />
      <FilterBar />
      <StatusBar />
    </div>
  );
}
